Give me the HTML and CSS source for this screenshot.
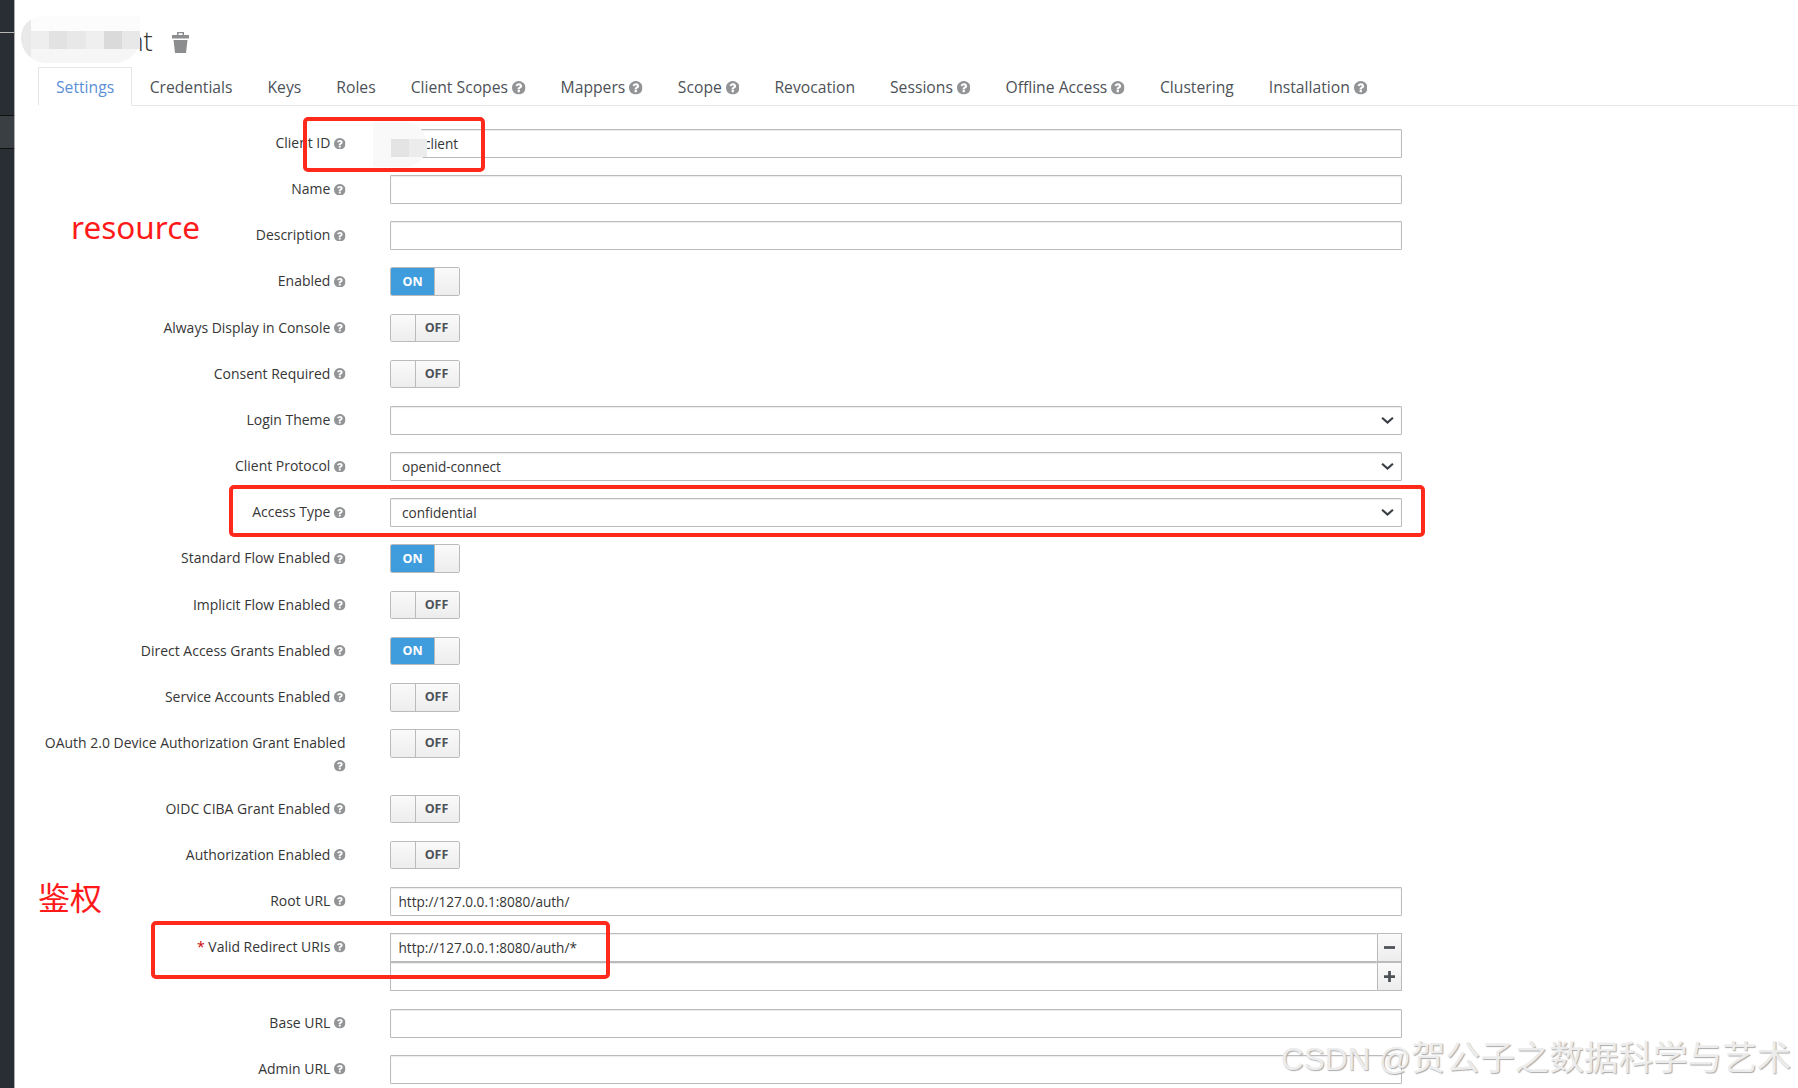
FILE: index.html
```html
<!DOCTYPE html>
<html lang="en">
<head>
    <meta charset="UTF-8">
    <meta name="viewport" content="width=device-width, initial-scale=1.0">
    <title>Client Settings</title>
    <link rel="stylesheet" href="styles.css">
</head>
<body>
    <svg class="icon-defs" aria-hidden="true">
        <symbol id="help" viewBox="128 128 1536 1536">
            <path d="M1024 1376v-192q0-14-9-23t-23-9h-192q-14 0-23 9t-9 23v192q0 14 9 23t23 9h192q14 0 23-9t9-23zm256-672q0-88-55.5-163t-138.5-116-170-41q-243 0-371 213-15 24 8 42l132 100q7 6 19 6 16 0 25-12 53-68 86-92 34-24 86-24 48 0 85.5 26t37.5 59q0 38-20 61t-68 45q-63 28-115.5 86.5t-52.5 125.5v36q0 14 9 23t23 9h192q14 0 23-9t9-23q0-19 21.5-49.5t54.5-49.5q32-18 49-28.5t46-35 44.5-48 28-60.5 12.5-81zm384 192q0 209-103 385.5t-279.5 279.5-385.5 103-385.5-103-279.5-279.5-103-385.5 103-385.5 279.5-279.5 385.5-103 385.5 103 279.5 279.5 103 385.5z"/>
        </symbol>
        <symbol id="chevron" viewBox="0 0 12 8">
            <path d="M1 1.5l5 4.5 5-4.5" fill="none" stroke="#393f44" stroke-width="2"/>
        </symbol>
    </svg>

    <aside class="sidebar">
        <div class="side-top"></div>
        <div class="side-active"></div>
    </aside>

    <main class="content">
        <div class="page-head">
            <h1>nt</h1>
            <svg class="trash" viewBox="0 0 17 21"><path fill-rule="evenodd" d="M5 0h7v3h5v3.500H0V3h5zm1.500 1.200V3h4V1.200zM1.500 8h14L14 21H3z"/></svg>
        </div>

        <ul class="tabs">
            <li class="tab active">Settings</li>
            <li class="tab">Credentials</li>
            <li class="tab">Keys</li>
            <li class="tab">Roles</li>
            <li class="tab">Client Scopes <svg class="help"><use href="#help"/></svg></li>
            <li class="tab">Mappers <svg class="help"><use href="#help"/></svg></li>
            <li class="tab">Scope <svg class="help"><use href="#help"/></svg></li>
            <li class="tab">Revocation</li>
            <li class="tab">Sessions <svg class="help"><use href="#help"/></svg></li>
            <li class="tab">Offline Access <svg class="help"><use href="#help"/></svg></li>
            <li class="tab">Clustering</li>
            <li class="tab">Installation <svg class="help"><use href="#help"/></svg></li>
        </ul>

        <form class="client-form">
            <div class="row">
                <label>Client ID <svg class="help"><use href="#help"/></svg></label>
                <input type="text" class="field client-id" value="client">
            </div>
            <div class="row">
                <label>Name <svg class="help"><use href="#help"/></svg></label>
                <input type="text" class="field">
            </div>
            <div class="row">
                <label>Description <svg class="help"><use href="#help"/></svg></label>
                <input type="text" class="field">
            </div>
            <div class="row">
                <label>Enabled <svg class="help"><use href="#help"/></svg></label>
                <div class="switch on"><span class="state">ON</span><span class="handle"></span></div>
            </div>
            <div class="row">
                <label>Always Display in Console <svg class="help"><use href="#help"/></svg></label>
                <div class="switch"><span class="handle"></span><span class="state">OFF</span></div>
            </div>
            <div class="row">
                <label>Consent Required <svg class="help"><use href="#help"/></svg></label>
                <div class="switch"><span class="handle"></span><span class="state">OFF</span></div>
            </div>
            <div class="row">
                <label>Login Theme <svg class="help"><use href="#help"/></svg></label>
                <div class="select-box">
                    <select class="field select"><option></option></select>
                    <svg class="chevron"><use href="#chevron"/></svg>
                </div>
            </div>
            <div class="row">
                <label>Client Protocol <svg class="help"><use href="#help"/></svg></label>
                <div class="select-box">
                    <select class="field select"><option>openid-connect</option></select>
                    <svg class="chevron"><use href="#chevron"/></svg>
                </div>
            </div>
            <div class="row">
                <label>Access Type <svg class="help"><use href="#help"/></svg></label>
                <div class="select-box">
                    <select class="field select"><option>confidential</option></select>
                    <svg class="chevron"><use href="#chevron"/></svg>
                </div>
            </div>
            <div class="row">
                <label>Standard Flow Enabled <svg class="help"><use href="#help"/></svg></label>
                <div class="switch on"><span class="state">ON</span><span class="handle"></span></div>
            </div>
            <div class="row">
                <label>Implicit Flow Enabled <svg class="help"><use href="#help"/></svg></label>
                <div class="switch"><span class="handle"></span><span class="state">OFF</span></div>
            </div>
            <div class="row">
                <label>Direct Access Grants Enabled <svg class="help"><use href="#help"/></svg></label>
                <div class="switch on"><span class="state">ON</span><span class="handle"></span></div>
            </div>
            <div class="row">
                <label>Service Accounts Enabled <svg class="help"><use href="#help"/></svg></label>
                <div class="switch"><span class="handle"></span><span class="state">OFF</span></div>
            </div>
            <div class="row">
                <label>OAuth 2.0 Device Authorization Grant Enabled <svg class="help"><use href="#help"/></svg></label>
                <div class="switch"><span class="handle"></span><span class="state">OFF</span></div>
            </div>
            <div class="row">
                <label>OIDC CIBA Grant Enabled <svg class="help"><use href="#help"/></svg></label>
                <div class="switch"><span class="handle"></span><span class="state">OFF</span></div>
            </div>
            <div class="row">
                <label>Authorization Enabled <svg class="help"><use href="#help"/></svg></label>
                <div class="switch"><span class="handle"></span><span class="state">OFF</span></div>
            </div>
            <div class="row">
                <label>Root URL <svg class="help"><use href="#help"/></svg></label>
                <input type="text" class="field" value="http://127.0.0.1:8080/auth/">
            </div>
            <div class="row">
                <label><span class="required">*</span> Valid Redirect URIs <svg class="help"><use href="#help"/></svg></label>
                <div class="multi">
                    <div class="multi-line">
                        <input type="text" class="field" value="http://127.0.0.1:8080/auth/*">
                        <button type="button" class="multi-btn"><svg viewBox="0 0 12 12"><path d="M0 4.500h12v3H0z"/></svg></button>
                    </div>
                    <div class="multi-line">
                        <input type="text" class="field">
                        <button type="button" class="multi-btn"><svg viewBox="0 0 12 12"><path d="M4.500 0h3v4.500H12v3H7.500V12h-3V7.500H0v-3h4.500z"/></svg></button>
                    </div>
                </div>
            </div>
            <div class="row">
                <label>Base URL <svg class="help"><use href="#help"/></svg></label>
                <input type="text" class="field">
            </div>
            <div class="row">
                <label>Admin URL <svg class="help"><use href="#help"/></svg></label>
                <input type="text" class="field">
            </div>
        </form>
    </main>

    <!-- blurred parts of the screenshot -->
    <div class="smudge smudge-title">
        <div class="cells">
            <i></i><i></i><i></i><i></i><i></i><i></i>
        </div>
    </div>
    <div class="smudge smudge-id">
        <div class="cells">
            <i></i><i></i>
        </div>
    </div>

    <!-- annotations drawn over the screenshot -->
    <div class="mark mark-id"></div>
    <div class="mark mark-access"></div>
    <div class="mark mark-redirect"></div>
    <div class="note note-resource">resource</div>
    <div class="note note-auth">鉴权</div>
    <div class="watermark"><span class="wm-latin">CSDN @</span>贺公子之数据科学与艺术</div>
</body>
</html>
```

FILE: styles.css
```css
* {
    box-sizing: border-box;
}
html, body {
    height: 1088px;
    overflow: hidden;
}
body {
    margin: 0;
    display: flex;
    position: relative;
    background: #fff;
    color: #363636;
    font-family: "Open Sans", "Noto Sans", sans-serif;
    font-size: 13.97px;
}
.icon-defs {
    position: absolute;
    width: 0;
    height: 0;
}
.sidebar {
    width: 15px;
    flex: none;
    background: #292e34;
    border-right: 1px solid #a9abad;
}
.side-top {
    height: 33px;
    border-bottom: 1px solid #b5b5b5;
}
.side-active {
    height: 34px;
    margin-top: 82px;
    background: #3a3f44;
    border-top: 1px solid #111;
    border-bottom: 1px solid #111;
}
.content {
    flex: 1;
    padding-left: 23px;
}
.page-head {
    height: 67px;
    display: flex;
    align-items: flex-start;
    padding-left: 89.4px;
}
h1 {
    margin: 23px 0 0;
    font-size: 27.5px;
    font-weight: 300;
    line-height: 36px;
    color: #363636;
}
.trash {
    width: 17px;
    height: 21px;
    margin: 32px 0 0 19px;
    fill: #8b8d8f;
}
.tabs {
    display: flex;
    margin: 0;
    padding: 0;
    list-style: none;
    height: 39px;
    border-bottom: 1px solid #e6e6e6;
}
.tab {
    height: 39px;
    padding: 0 17.5px;
    line-height: 40px;
    font-size: 15.69px;
    color: #4d5258;
    white-space: nowrap;
}
.tab.active {
    padding: 0 17px;
    line-height: 38px;
    color: #5b8fd6;
    background: #fff;
    border: 1px solid #e6e6e6;
    border-bottom-color: #fff;
}
.help {
    width: 11.5px;
    height: 11.5px;
    fill: #929496;
    vertical-align: -1px;
}
.tab .help {
    width: 13.5px;
    height: 13.5px;
    vertical-align: -1.5px;
}
.client-form {
    padding-top: 23px;
}
.row {
    display: grid;
    grid-template-columns: 307.5px 1012px;
    column-gap: 44.5px;
    margin-bottom: 17.48px;
}
.row label {
    padding-top: 3px;
    text-align: right;
    line-height: 22.5px;
}
.required {
    color: #c00;
}
.field {
    display: block;
    width: 100%;
    height: 28.7px;
    padding: 0 7.5px;
    border: 1px solid #bbb;
    border-radius: 1px;
    background: #fff;
    box-shadow: inset 0 1px 1px rgba(3, 3, 3, 0.08);
    color: #363636;
    font: inherit;
    font-size: 13.6px;
    outline: none;
}
.client-id {
    padding-left: 33px;
}
.select-box {
    position: relative;
}
.select {
    padding-left: 11px;
    appearance: none;
}
.chevron {
    position: absolute;
    right: 8px;
    top: 10px;
    width: 13px;
    height: 9px;
}
.switch {
    display: flex;
    width: 70px;
    height: 28.7px;
    border: 1px solid #bbb;
    border-radius: 2px;
    overflow: hidden;
    font-weight: 700;
    font-size: 12.5px;
}
.switch .state {
    display: flex;
    flex: 1;
    align-items: center;
    justify-content: center;
    padding-bottom: 1px;
    background: linear-gradient(#fafafa, #ededed);
    color: #4d5258;
}
.switch .handle {
    width: 25px;
    flex: none;
    background: linear-gradient(#fafafa, #ededed);
    border-right: 1px solid #bbb;
}
.switch.on .state {
    background: #3f9ddd;
    color: #fff;
}
.switch.on .handle {
    border-right: 0;
    border-left: 1px solid #bbb;
}
.switch:not(.on) .state {
    padding-right: 2px;
}
.multi-line {
    display: flex;
    margin-bottom: 0.5px;
}
.multi-line .field {
    flex: 1;
    border-right: 0;
}
.multi-btn {
    width: 25px;
    height: 28.7px;
    padding: 0;
    display: flex;
    align-items: center;
    justify-content: center;
    border: 1px solid #bbb;
    background: linear-gradient(#fafafa, #ededed);
}
.multi-btn svg {
    width: 11px;
    height: 11px;
    fill: #4d5258;
}
.smudge {
    position: absolute;
}
.cells {
    display: flex;
    position: absolute;
    right: 0;
}
.cells i {
    display: block;
    flex: 1;
}
.smudge-title {
    left: 21px;
    top: 16px;
    width: 119px;
    height: 47px;
    border-radius: 22px 0 26px 26px;
    background:
        linear-gradient(#f6f6f6, #f6f6f6) 10px 33px / 110px 14px no-repeat,
        linear-gradient(#fcfcfc, #fcfcfc) 10px 0 / 110px 33px no-repeat,
        #e9e9e9;
}
.smudge-title .cells {
    left: 10px;
    top: 15px;
    height: 18px;
}
.smudge-title i:nth-child(1) { background: #eee; }
.smudge-title i:nth-child(2) { background: #e2e2e2; }
.smudge-title i:nth-child(3) { background: #e8e8e8; }
.smudge-title i:nth-child(4) { background: #efefef; }
.smudge-title i:nth-child(5) { background: #dadada; }
.smudge-title i:nth-child(6) { background: #e8e8e8; }
.smudge-id {
    left: 373px;
    top: 122px;
    width: 54px;
    height: 45px;
    background: #f9f9f9;
    border-radius: 0 24px 24px 0;
}
.smudge-id .cells {
    left: 18px;
    top: 17px;
    height: 18px;
}
.smudge-id i:nth-child(1) { background: #e4e4e4; }
.smudge-id i:nth-child(2) { background: #ececec; }
.mark {
    position: absolute;
    border: 4px solid #ff2a1c;
    border-radius: 5px;
}
.mark-id {
    left: 303px;
    top: 117px;
    width: 182px;
    height: 55px;
}
.mark-access {
    left: 229px;
    top: 485px;
    width: 1196px;
    height: 52px;
}
.mark-redirect {
    left: 151px;
    top: 921px;
    width: 459px;
    height: 58px;
}
.note {
    position: absolute;
    color: #ff1a1a;
    white-space: nowrap;
}
.note-resource {
    left: 71px;
    top: 204px;
    font-size: 31.5px;
    line-height: 46px;
    font-family: "Noto Sans", sans-serif;
}
.note-auth {
    left: 38px;
    top: 873px;
    font-size: 32px;
    line-height: 46px;
    font-family: "Noto Sans CJK SC", sans-serif;
}
.watermark {
    position: absolute;
    left: 1281px;
    top: 1035px;
    color: #ececec;
    font-family: "Liberation Sans", "Noto Sans CJK SC", sans-serif;
    font-size: 34.6px;
    line-height: 46px;
    white-space: nowrap;
    text-shadow: 1px 1px 1px #aaa;
}
.wm-latin {
    font-size: 31.5px;
}
```
